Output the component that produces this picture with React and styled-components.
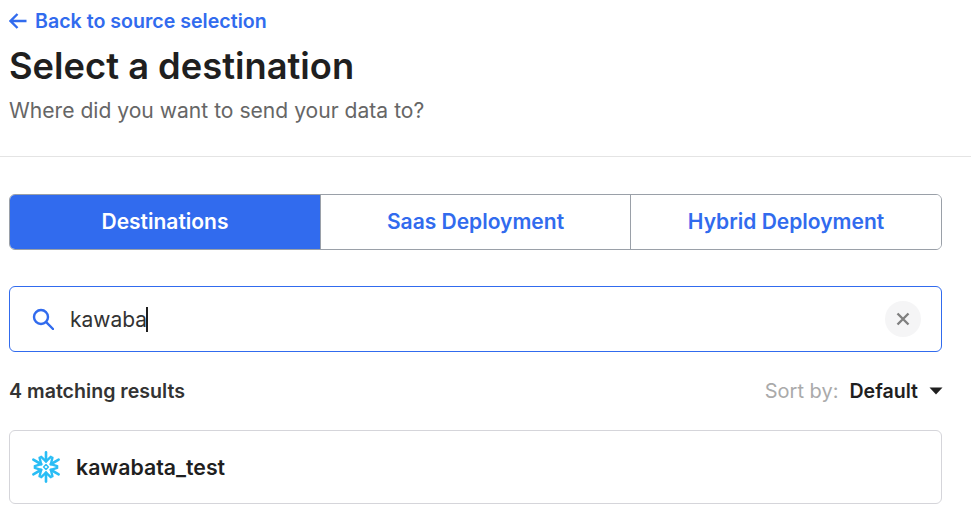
import styled, { createGlobalStyle } from "styled-components"

const Global = createGlobalStyle`
    html, body {
        margin: 0;
        padding: 0;
        background: #fff;
        font-family: Inter, "Liberation Sans", sans-serif;
        color: #1f1f1f;
        overflow: hidden;
    }
`

const Header = styled.header`
    padding: 9px 29px 0 9px;
    height: 147px;
    border-bottom: 1px solid #e4e4e4;
`

const BackLink = styled.a`
    display: flex;
    align-items: center;
    gap: 8px;
    height: 24px;
    color: #316bee;
    font-size: 19.6px;
    font-weight: 600;
`

const Title = styled.h1`
    margin: 9px 0 0;
    font-size: 36.3px;
    line-height: 48px;
    font-weight: 600;
    color: #1f1f1f;
`

const Subtitle = styled.p`
    margin: 7px 0 0;
    font-size: 21.1px;
    line-height: 28px;
    color: #666;
`

const Main = styled.main`
    padding: 37px 29px 0 9px;
`

const Tabs = styled.div`
    display: grid;
    grid-template-columns: 310px 310px 1fr;
    height: 56px;
    box-sizing: border-box;
    border: 1px solid #9aa0a8;
    border-radius: 6px;
    overflow: hidden;
`

const Tab = styled.div`
    display: flex;
    align-items: center;
    justify-content: center;
    padding-bottom: 1px;
    font-size: 21px;
    font-weight: 600;
    color: ${p => (p.$active ? "#fff" : "#316bee")};
    background: ${p => (p.$active ? "#316bee" : "#fff")};
    & + & {
        border-left: 1px solid #9aa0a8;
    }
`

const SearchBox = styled.div`
    display: flex;
    align-items: center;
    height: 66px;
    box-sizing: border-box;
    margin-top: 36px;
    padding: 0 20px 0 22px;
    border: 1px solid #316bee;
    border-radius: 6px;
`

const SearchText = styled.span`
    flex: 1;
    margin-left: 16px;
    font-size: 21px;
    color: #333;
    display: flex;
    align-items: center;
`

const Caret = styled.i`
    display: block;
    width: 2px;
    height: 25px;
    margin-left: -1px;
    background: #1f1f1f;
`

const ClearButton = styled.div`
    display: flex;
    align-items: center;
    justify-content: center;
    width: 36px;
    height: 36px;
    border-radius: 50%;
    background: #f5f5f6;
    color: #808080;
`

const ResultsBar = styled.div`
    display: flex;
    align-items: center;
    justify-content: space-between;
    height: 24px;
    margin-top: 27px;
`

const Count = styled.span`
    font-size: 19.6px;
    font-weight: 600;
    color: #333;
`

const Sort = styled.div`
    display: flex;
    align-items: center;
    font-size: 19.6px;
    margin-right: -1px;
`

const SortLabel = styled.span`
    color: #aaa;
    font-size: 20px;
    margin-right: 11px;
`

const SortValue = styled.span`
    font-weight: 600;
    color: #1f1f1f;
    margin-right: 11px;
`

const Card = styled.div`
    display: flex;
    align-items: center;
    gap: 14px;
    height: 74px;
    box-sizing: border-box;
    margin-top: 27px;
    padding-left: 20px;
    border: 1px solid #d5d5da;
    border-radius: 6px;
    font-size: 21.3px;
    font-weight: 600;
    color: #1f1f1f;
`

const ArrowLeft = () => (
    <svg width="18" height="18" viewBox="0 0 18 18" fill="none" stroke="#316bee" strokeWidth="2.4">
        <path d="M1.5 9H17.5M8.5 2L1.5 9L8.5 16" />
    </svg>
)

const SearchIcon = () => (
    <svg width="22" height="22" viewBox="0 0 22 22" fill="none" stroke="#316bee" strokeWidth="2.4">
        <circle cx="9" cy="9" r="7" />
        <path d="M14.2 14.2L21 21" strokeLinecap="round" />
    </svg>
)

const CloseIcon = () => (
    <svg width="14" height="14" viewBox="0 0 14 14" fill="none" stroke="currentColor" strokeWidth="2.4">
        <path d="M1.5 1.5L12.5 12.5M12.5 1.5L1.5 12.5" />
    </svg>
)

const CaretDown = () => (
    <svg width="14" height="8" viewBox="0 0 14 8" fill="#1f1f1f">
        <path d="M0.5 0.5H13.5L7 7.5Z" />
    </svg>
)

// snowflake logo: six arms, each a stem and a chevron, round a small diamond
const arms = [0, 60, 120, 180, 240, 300]

const SnowflakeLogo = () => (
    <svg width="32" height="32" viewBox="0 0 32 32" fill="none" stroke="#29bdf5" strokeLinecap="round" strokeLinejoin="round">
        {arms.map(a => (
            <g key={a} transform={`rotate(${a} 16 16)`}>
                <path d="M16 10.5V1.4" strokeWidth="2.6" />
                <path d="M11.2 5.8L16 10.4L20.8 5.8" strokeWidth="2.4" />
            </g>
        ))}
        <path d="M16 13.6L18.4 16L16 18.4L13.6 16Z" strokeWidth="1.4" />
    </svg>
)

const App = () => {
    return (
        <>
            <Global />
            <Header>
                <BackLink>
                    <ArrowLeft />
                    Back to source selection
                </BackLink>
                <Title>Select a destination</Title>
                <Subtitle>Where did you want to send your data to?</Subtitle>
            </Header>
            <Main>
                <Tabs>
                    <Tab $active>Destinations</Tab>
                    <Tab>Saas Deployment</Tab>
                    <Tab>Hybrid Deployment</Tab>
                </Tabs>
                <SearchBox>
                    <SearchIcon />
                    <SearchText>
                        kawaba
                        <Caret />
                    </SearchText>
                    <ClearButton>
                        <CloseIcon />
                    </ClearButton>
                </SearchBox>
                <ResultsBar>
                    <Count>4 matching results</Count>
                    <Sort>
                        <SortLabel>Sort by:</SortLabel>
                        <SortValue>Default</SortValue>
                        <CaretDown />
                    </Sort>
                </ResultsBar>
                <Card>
                    <SnowflakeLogo />
                    kawabata_test
                </Card>
            </Main>
        </>
    )
}

export default App
